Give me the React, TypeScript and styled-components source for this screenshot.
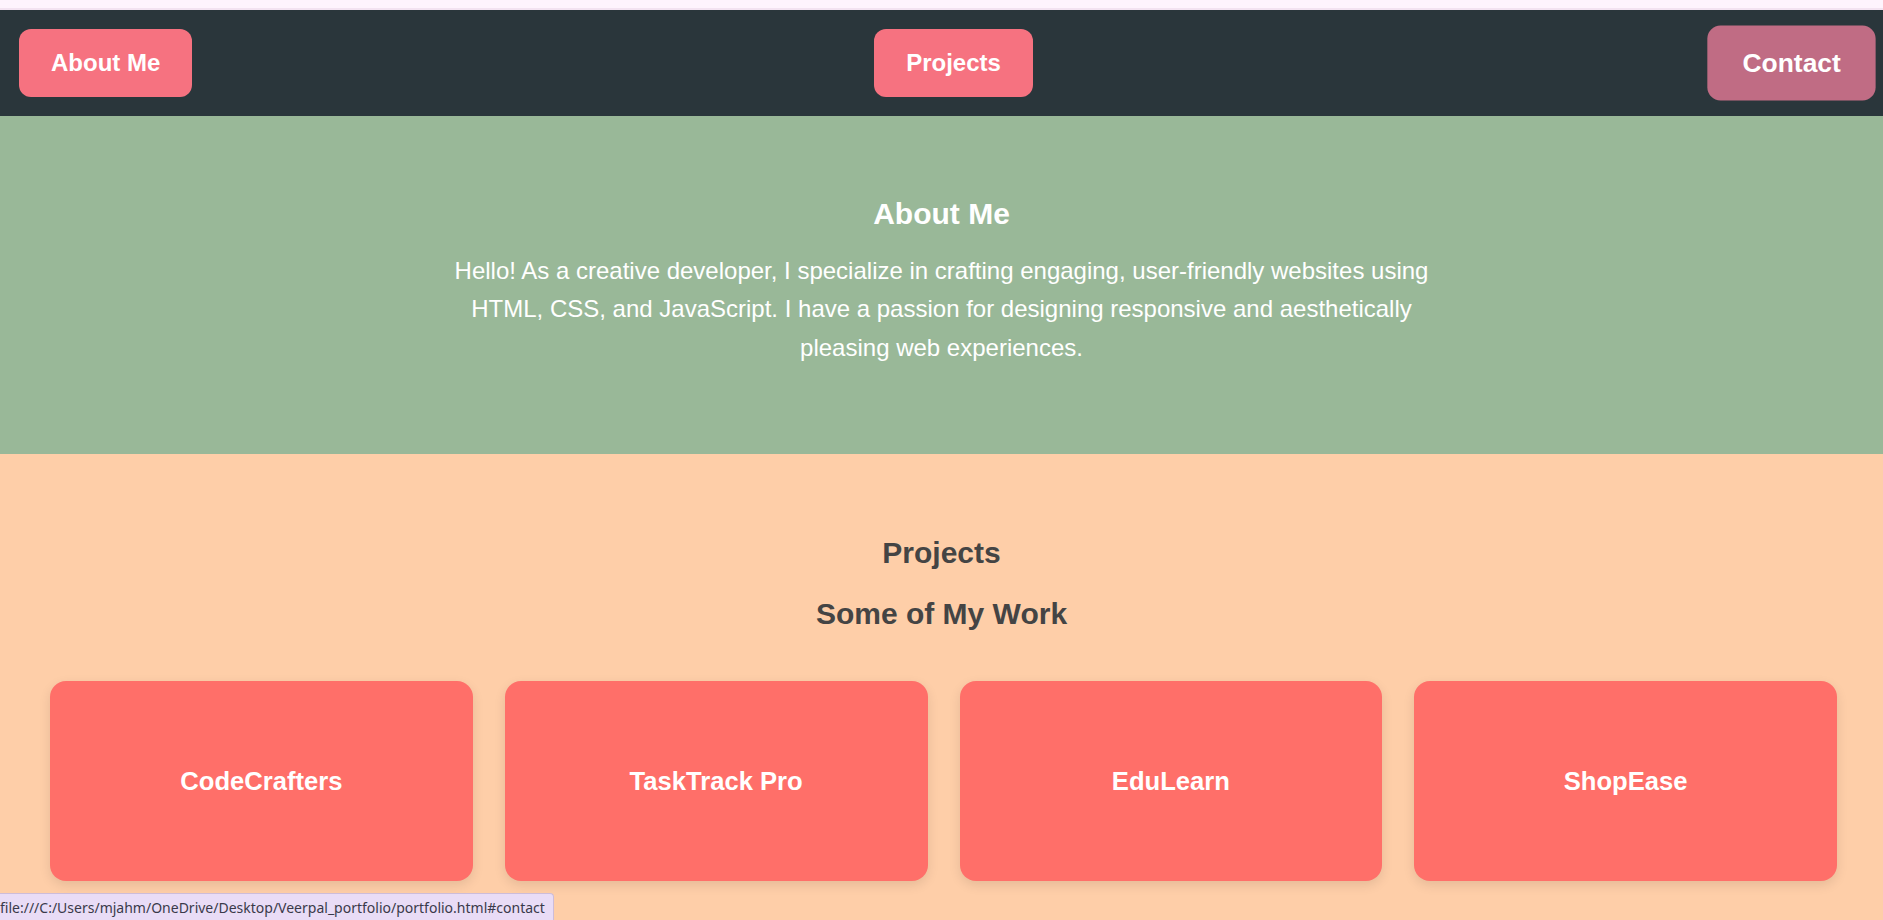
import styled, { createGlobalStyle } from "styled-components";

const GlobalStyle = createGlobalStyle`
  * {
    box-sizing: border-box;
  }
  body {
    margin: 0;
    font-family: "Liberation Sans", Arial, sans-serif;
    background-color: #fecea8;
  }
`

const TopStrip = styled.div`
  height: 10px;
  background-color: #fef4fd;
  border-bottom: 2px solid #f3e3f1;
`

const NavBar = styled.nav`
  background-color: #2a363b;
  display: flex;
  justify-content: space-between;
  align-items: center;
  padding: 19px 15px 19px 19px;
`

const NavButton = styled.a<{ $hover?: boolean }>`
  display: flex;
  align-items: center;
  justify-content: center;
  height: 68px;
  padding: 0 32px;
  border-radius: 12px;
  background-color: ${props => (props.$hover ? "#c06c84" : "#f67280")};
  color: #fff;
  font-size: 24px;
  font-weight: 700;
  text-decoration: none;
  transform: ${props => (props.$hover ? "scale(1.1)" : "none")};
`

const AboutSection = styled.section`
  background-color: #99b898;
  color: #fff;
  text-align: center;
  padding: 81px 0 87px;
  h2 {
    font-size: 30px;
    margin: 0 0 21px;
  }
  p {
    font-size: 24px;
    line-height: 1.6;
    max-width: 1000px;
    margin: 0 auto;
  }
`

const ProjectsSection = styled.section`
  background-color: #fecea8;
  color: #444;
  text-align: center;
  padding: 82px 0 80px;
  h2 {
    font-size: 30px;
    margin: 0;
  }
  .projects__sub {
    margin-top: 27px;
  }
`

const CardGrid = styled.div`
  display: grid;
  grid-template-columns: repeat(4, 1fr);
  gap: 32px;
  padding: 0 46px 0 50px;
  margin-top: 50px;
`

const Card = styled.div`
  height: 200px;
  border-radius: 16px;
  background-color: #ff6f69;
  box-shadow: 0 4px 12px rgba(0, 0, 0, 0.1);
  display: flex;
  align-items: center;
  justify-content: center;
  color: #fff;
  font-size: 25.6px;
  font-weight: 700;
`

const StatusBar = styled.div`
  position: fixed;
  left: 0;
  bottom: 0;
  height: 27px;
  padding: 0 8px 0 0;
  display: flex;
  align-items: center;
  background-color: #e9dcf6;
  border: 1px solid #cdbcd9;
  border-left: none;
  border-bottom: none;
  border-top-right-radius: 4px;
  color: #3a3a4a;
  font-family: "Noto Sans", "Liberation Sans", sans-serif;
  font-size: 14px;
  white-space: nowrap;
`

const projects = ["CodeCrafters", "TaskTrack Pro", "EduLearn", "ShopEase"];

const App = () => {
  return (
    <>
      <GlobalStyle />
      <TopStrip />
      <NavBar>
        <NavButton href="#about">About Me</NavButton>
        <NavButton href="#projects">Projects</NavButton>
        <NavButton href="#contact" $hover>Contact</NavButton>
      </NavBar>
      <AboutSection id="about">
        <h2>About Me</h2>
        <p>
          Hello! As a creative developer, I specialize in crafting engaging, user-friendly websites using
          HTML, CSS, and JavaScript. I have a passion for designing responsive and aesthetically
          pleasing web experiences.
        </p>
      </AboutSection>
      <ProjectsSection id="projects">
        <h2>Projects</h2>
        <h2 className="projects__sub">Some of My Work</h2>
        <CardGrid>
          {projects.map(p => (
            <Card key={p}>{p}</Card>
          ))}
        </CardGrid>
      </ProjectsSection>
      <StatusBar>file:///C:/Users/mjahm/OneDrive/Desktop/Veerpal_portfolio/portfolio.html#contact</StatusBar>
    </>
  )
};

export default App
